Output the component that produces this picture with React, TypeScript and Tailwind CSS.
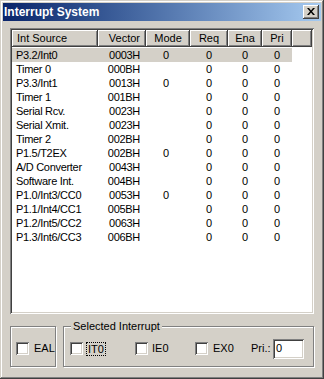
import React from "react";

const rows: [string, string, string][] = [
  ["P3.2/Int0", "0003H", "0"],
  ["Timer 0", "000BH", ""],
  ["P3.3/Int1", "0013H", "0"],
  ["Timer 1", "001BH", ""],
  ["Serial Rcv.", "0023H", ""],
  ["Serial Xmit.", "0023H", ""],
  ["Timer 2", "002BH", ""],
  ["P1.5/T2EX", "002BH", "0"],
  ["A/D Converter", "0043H", ""],
  ["Software Int.", "004BH", ""],
  ["P1.0/Int3/CC0", "0053H", "0"],
  ["P1.1/Int4/CC1", "005BH", ""],
  ["P1.2/Int5/CC2", "0063H", ""],
  ["P1.3/Int6/CC3", "006BH", ""],
];

const raised =
  "shadow-[inset_-1px_-1px_#404040,inset_1px_1px_#ffffff,inset_-2px_-2px_#808080]";
const sunken =
  "shadow-[inset_1px_1px_#808080,inset_-1px_-1px_#ffffff,inset_2px_2px_#404040,inset_-2px_-2px_#d4d0c8]";
const etched = "border border-[#808080] shadow-[1px_1px_#ffffff,inset_1px_1px_#ffffff]";

function Check() {
  return <div className={`w-[13px] h-[13px] bg-white shrink-0 ${sunken}`} />;
}

export default function App() {
  return (
    <div className="w-[324px] h-[379px] bg-[#d4d0c8] p-[3px] flex flex-col font-['Liberation_Sans',Arial,sans-serif] text-[11px] text-black shadow-[inset_-1px_-1px_#404040,inset_1px_1px_#d4d0c8,inset_-2px_-2px_#808080,inset_2px_2px_#ffffff]">
      {/* Title bar */}
      <div className="h-[18px] flex items-center justify-between pl-[1px] pr-[2px] bg-gradient-to-r from-[#0a246a] to-[#a6caf0]">
        <span className="text-white font-bold text-[12px] leading-none">Interrupt System</span>
        <div className={`w-[16px] h-[14px] bg-[#d4d0c8] flex items-center justify-center ${raised}`}>
          <svg width="8" height="7" viewBox="0 0 8 7" className="-mt-[1px]">
            <path d="M0 0h2l2 2.5L6 0h2L5 3.5 8 7H6L4 4.5 2 7H0l3-3.5z" fill="#000" />
          </svg>
        </div>
      </div>

      {/* Body */}
      <div className="flex-1 flex flex-col px-[7px] pt-[7px] pb-[9px]">
        {/* List box */}
        <div className={`h-[286px] bg-white p-[2px] flex flex-col ${sunken}`}>
          <div className="h-[17px] flex bg-[#d4d0c8] leading-[17px]">
            <div className={`w-[86px] pl-[5px] ${raised}`}>Int Source</div>
            <div className={`w-[48px] text-right pr-[6px] ${raised}`}>Vector</div>
            <div className={`w-[44px] text-center ${raised}`}>Mode</div>
            <div className={`w-[38px] text-center ${raised}`}>Req</div>
            <div className={`w-[34px] text-center ${raised}`}>Ena</div>
            <div className={`w-[30px] text-center ${raised}`}>Pri</div>
            <div className={`flex-1 ${raised}`} />
          </div>
          <div className="pt-[1px] flex flex-col">
            {rows.map((r, i) => (
              <div
                key={i}
                className={`h-[14px] w-[280px] flex leading-[14px] tracking-[-0.3px] ${i === 0 ? "bg-[#d4d0c8]" : ""}`}
              >
                <div className="w-[86px] pl-[4px] whitespace-nowrap">{r[0]}</div>
                <div className="w-[48px] text-right pr-[6px]">{r[1]}</div>
                <div className="w-[44px] text-center pr-[4px]">{r[2]}</div>
                <div className="w-[38px] text-center">0</div>
                <div className="w-[34px] text-center">0</div>
                <div className="w-[30px] text-center">0</div>
              </div>
            ))}
          </div>
        </div>

        {/* Bottom group boxes */}
        <div className="mt-[12px] h-[41px] flex gap-[7px]">
          <div className={`w-[46px] ${etched} flex items-center pl-[5px] pt-[4px] gap-[5px]`}>
            <Check />
            <span>EAL</span>
          </div>
          <div className={`relative flex-1 ${etched} flex items-center pt-[4px] pl-[6px]`}>
            <span className="absolute left-[7px] -top-[8px] bg-[#d4d0c8] px-[2px] leading-[14px]">
              Selected Interrupt
            </span>
            <div className="w-[65px] flex items-center gap-[3px]">
              <Check />
              <span className="border border-dotted border-black px-[1px] leading-[12px]">IT0</span>
            </div>
            <div className="w-[60px] flex items-center gap-[4px]">
              <Check />
              <span>IE0</span>
            </div>
            <div className="w-[56px] flex items-center gap-[5px]">
              <Check />
              <span>EX0</span>
            </div>
            <span className="w-[22px]">Pri.:</span>
            <div className={`w-[31px] h-[20px] bg-white pl-[3px] pt-[2px] leading-[14px] ${sunken}`}>0</div>
          </div>
        </div>
      </div>
    </div>
  );
}
